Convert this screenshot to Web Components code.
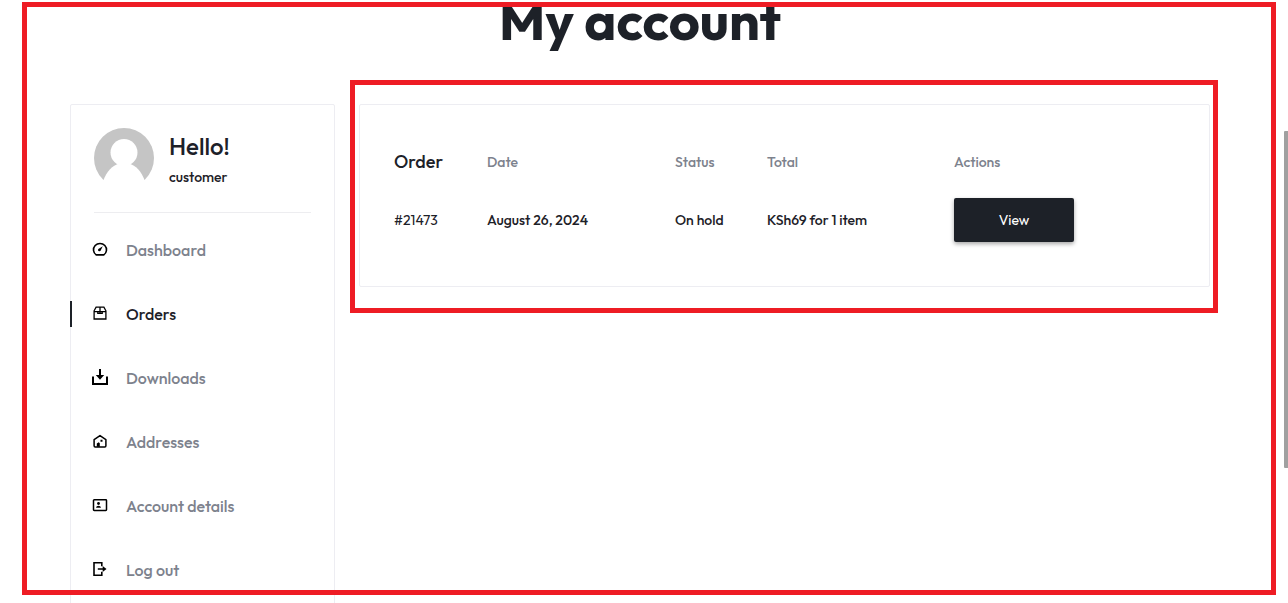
<!DOCTYPE html>
<html lang="en">
<head>
<meta charset="utf-8">
<meta name="viewport" content="width=device-width, initial-scale=1">
<title>My account</title>
<style>
  html, body { margin: 0; height: 100%; background: #fff; }
  body { font-family: Outfit, Lato, sans-serif; color: #1d2128; }
</style>
</head>
<body>
<account-page>
  <account-nav slot="nav" name="Hello!" role-label="customer">
    <nav-item icon="dashboard">Dashboard</nav-item>
    <nav-item icon="orders" active>Orders</nav-item>
    <nav-item icon="downloads">Downloads</nav-item>
    <nav-item icon="addresses">Addresses</nav-item>
    <nav-item icon="details">Account details</nav-item>
    <nav-item icon="logout">Log out</nav-item>
  </account-nav>
  <orders-card></orders-card>
</account-page>
<script>
const define = (name, markup, setup) => {
  const template = document.createElement('template');
  template.innerHTML = markup;
  customElements.define(name, class extends HTMLElement {
    connectedCallback() {
      if (this.shadowRoot) return;
      const root = this.attachShadow({ mode: 'open' });
      root.append(template.content.cloneNode(true));
      if (setup) setup(this, root);
    }
  });
};

const icons = {
  dashboard: '<path d="M4.2 13.9a6.5 6.3 0 1 1 7.6 0Z" fill="none" stroke="#000" stroke-width="1.6" stroke-linejoin="round"/><path d="M7.2 7.5 10.8 5.3 8.8 9.2A1.4 1.4 0 1 1 7.2 7.5Z"/>',
  orders: '<path d="M2.1 14V5.8L4.1 2.1h7.8l2 3.7V14ZM2.1 6.7h11.8M8 2.1v6.2M5.8 6.7v1.6h4.4V6.7" fill="none" stroke="#000" stroke-width="1.3"/>',
  downloads: '<path d="M1 7.5V15h14V7.5" fill="none" stroke="#000" stroke-width="2"/><path d="M7 0h2v6h3.2L8 10.7 3.8 6H7Z"/>',
  addresses: '<path d="M2.1 6.6 8 2.6l5.9 4v6.2q0 1.1-1.1 1.1H3.2q-1.1 0-1.1-1.1Z" fill="none" stroke="#000" stroke-width="1.5" stroke-linejoin="round"/><path d="M4.8 13.8V10.5l1.9-1.3 1.1 1.1v3.5ZM8.5 6.8h2v2h-2Z"/>',
  details: '<rect x="1.5" y="2.8" width="13" height="10.6" rx=".7" fill="none" stroke="#000" stroke-width="1.5"/><circle cx="6.5" cy="6.5" r="1.4"/><path d="M4 10.8Q4.2 8.7 6.5 8.7t2.5 2.1Z"/>',
  logout: '<path d="M9.8 5.2V1.8H2v12.4h7.8v-3.4M5.8 8h6" fill="none" stroke="#000" stroke-width="1.6"/><path d="M10.7 5 14.5 8l-3.8 3Z"/>'
};

define('scroll-thumb', `
  <style>
    :host { display: block; position: absolute; top: 131px; right: 0; width: 4px; height: 337px; background: #a0a0a0; border-radius: 1px 0 0 1px; }
  </style>`);

define('mark-frame', `
  <style>
    :host { display: block; position: absolute; box-sizing: border-box; border: 5px solid #ee1c24; pointer-events: none; }
  </style>`);

define('user-avatar', `
  <style>
    :host { display: block; flex: none; width: 60px; height: 60px; border-radius: 50%; overflow: hidden; }
    svg { display: block; }
  </style>
  <svg width="60" height="60" viewBox="0 0 60 60" aria-hidden="true">
    <rect width="60" height="52" fill="#c5c5c5"/>
    <circle cx="30" cy="24.5" r="13.5" fill="#fff"/>
    <path d="M9 53C13 43 18.5 37.5 25 35.5H35C42 37.5 47 43 51 53V60H9Z" fill="#fff"/>
  </svg>`);

define('account-page', `
  <style>
    :host { display: block; position: relative; height: 100vh; overflow: hidden; }
    main { padding: 0 24px 0 16px; }
    h1 { margin: 0; font-size: 54px; line-height: 40px; font-weight: 700; text-align: center; }
    .columns { display: grid; grid-template-columns: 265px minmax(0, 1fr); align-items: start; gap: 24px; max-width: 1140px; margin: 64px auto 0; }
    .page-mark { inset: 2px 12px 8px 22px; }
  </style>
  <main>
    <h1>My account</h1>
    <div class="columns">
      <slot name="nav"></slot>
      <slot></slot>
    </div>
  </main>
  <mark-frame class="page-mark"></mark-frame>
  <scroll-thumb></scroll-thumb>`);

define('account-nav', `
  <style>
    :host { display: block; box-sizing: border-box; border: 1px solid #ededf2; border-radius: 2px; padding-bottom: 24px; }
    header { display: flex; gap: 15px; margin: 0 23px; padding: 23px 0 24px; border-bottom: 1px solid #ededf0; }
    header > div { height: 60px; }
    .hello { font-size: 24px; line-height: 36px; font-weight: 500; }
    .role { font-size: 14px; line-height: 26px; font-weight: 500; }
    p { margin: 0; }
    nav { display: flex; flex-direction: column; gap: 38px; margin: 24px 0 0 -1px; }
  </style>
  <header>
    <user-avatar></user-avatar>
    <div><p class="hello"></p><p class="role"></p></div>
  </header>
  <nav aria-label="Account"><slot></slot></nav>`,
  (host, root) => {
    root.querySelector('.hello').textContent = host.getAttribute('name');
    root.querySelector('.role').textContent = host.getAttribute('role-label');
  });

define('nav-item', `
  <style>
    :host { display: block; }
    a { display: flex; align-items: center; gap: 18px; height: 26px; padding-left: 20px; border-left: 2px solid transparent; color: #7d828d; font-size: 16px; font-weight: 500; line-height: 26px; text-decoration: none; }
    :host([active]) a { border-color: #1d2128; color: #1d2128; }
    svg { display: block; flex: none; margin-bottom: 2px; }
  </style>
  <a href="#"><svg width="16" height="16" viewBox="0 0 16 16" aria-hidden="true"></svg><span><slot></slot></span></a>`,
  (host, root) => {
    root.querySelector('svg').innerHTML = icons[host.getAttribute('icon')];
    if (host.hasAttribute('active')) root.querySelector('a').setAttribute('aria-current', 'page');
  });

define('action-button', `
  <style>
    :host { display: block; }
    button { display: block; width: 120px; height: 44px; padding: 0; border: 0; border-radius: 2px; background: #1d2128; color: #fff; font: inherit; font-size: 14px; font-weight: 400; box-shadow: 0 2px 4px rgba(0, 0, 0, .35); }
  </style>
  <button type="button"><slot></slot></button>`);

define('orders-card', `
  <style>
    :host { display: block; position: relative; box-sizing: border-box; padding: 33px 34px 32px; border: 1px solid #ededf2; border-radius: 2px; }
    table { width: 100%; table-layout: fixed; border-collapse: collapse; font-size: 14px; line-height: 24px; }
    th, td { padding: 0; text-align: left; font-weight: 500; }
    th { height: 48px; color: #7d828d; }
    th:first-child { color: #1d2128; font-size: 18px; }
    td { height: 68px; }
    td a { color: inherit; font-weight: 400; text-decoration: none; }
    .number { width: 93px; }
    .date { width: 188px; }
    .status { width: 92px; }
    .total { width: 187px; }
    .orders-mark { inset: -25px -9px -27px -10px; }
  </style>
  <table>
    <colgroup><col class="number"><col class="date"><col class="status"><col class="total"><col></colgroup>
    <thead><tr><th scope="col">Order</th><th scope="col">Date</th><th scope="col">Status</th><th scope="col">Total</th><th scope="col">Actions</th></tr></thead>
    <tbody><tr><td><a href="#">#21473</a></td><td>August 26, 2024</td><td>On hold</td><td>KSh69 for 1 item</td><td><action-button>View</action-button></td></tr></tbody>
  </table>
  <mark-frame class="orders-mark"></mark-frame>`);
</script>
</body>
</html>
